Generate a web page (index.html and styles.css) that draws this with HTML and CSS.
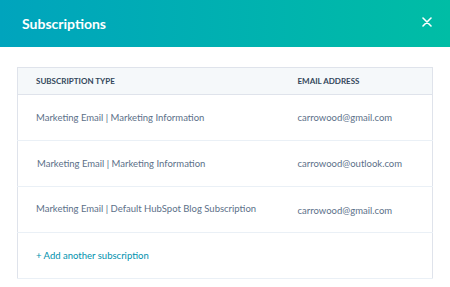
FILE: index.html
```html
<!DOCTYPE html>
<html lang="en">
    <head>
        <meta charset="UTF-8">
        <meta name="viewport" content="width=device-width, initial-scale=1.0">
        <title>Subscriptions</title>
        <link rel="stylesheet" href="styles.css">
    </head>
    <body>
        <header class="modal-head">
            <h1 class="modal-title">Subscriptions</h1>
            <button class="close-btn" aria-label="Close">
                <svg width="10" height="10" viewBox="0 0 10 10">
                    <path d="M1 1 L9 9 M9 1 L1 9" stroke="#fff" stroke-width="1.6" stroke-linecap="round"/>
                </svg>
            </button>
        </header>
        <main class="modal-body">
            <table class="subs">
                <thead>
                    <tr>
                        <th class="col-type">Subscription type</th>
                        <th>Email address</th>
                    </tr>
                </thead>
                <tbody>
                    <tr>
                        <td>Marketing Email | Marketing Information</td>
                        <td>carrowood@gmail.com</td>
                    </tr>
                    <tr>
                        <td class="nudge">Marketing Email | Marketing Information</td>
                        <td>carrowood@outlook.com</td>
                    </tr>
                    <tr>
                        <td class="lift">Marketing Email | Default HubSpot Blog Subscription</td>
                        <td class="drop">carrowood@gmail.com</td>
                    </tr>
                    <tr>
                        <td colspan="2"><a class="add-link" href="#">+ Add another subscription</a></td>
                    </tr>
                </tbody>
            </table>
        </main>
    </body>
</html>
```

FILE: styles.css
```css
*,*::before,*::after{
    padding: 0;
    margin: 0;
    box-sizing: border-box;
}
body{
    width: 450px;
    height: 287px;
    overflow: hidden;
    background: #fff;
    font-family: Lato, "Open Sans", sans-serif;
    color: #516f90;
}
.modal-head{
    height: 47px;
    padding: 0 18px 0 22px;
    display: flex;
    align-items: center;
    justify-content: space-between;
    background-image: linear-gradient(90deg, #00a4bd, #00bda5);
}
.modal-title{
    font-size: 14px;
    font-weight: 700;
    color: #fff;
}
.close-btn{
    border: none;
    background: none;
    width: 10px;
    height: 10px;
    display: flex;
    margin-top: -3px;
}
.modal-body{
    padding: 20px 17px 0 17px;
}
.subs{
    width: 416px;
    border-collapse: collapse;
    border: 1px solid #dfe3eb;
}
.subs th{
    height: 27px;
    text-align: left;
    font-size: 8px;
    font-weight: 700;
    text-transform: uppercase;
    color: #33475b;
    background: #f5f8fa;
    padding: 0 0 0 18px;
    border-bottom: 1px solid #dfe3eb;
}
.subs .col-type{
    width: 262px;
}
.subs td{
    height: 46px;
    font-size: 9.5px;
    padding: 0 0 0 18px;
    border-bottom: 1px solid #eaf0f6;
    color: #5c7089;
}
.subs td.nudge{
    padding-left: 19px;
}
.subs td.lift{
    padding-bottom: 2px;
}
.subs td.drop{
    padding-top: 2px;
}
.add-link{
    color: #0091ae;
    text-decoration: none;
    font-size: 9.5px;
}
```
